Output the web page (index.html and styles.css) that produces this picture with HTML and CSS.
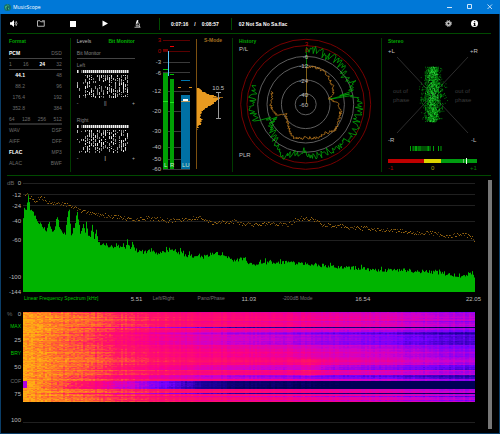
FILE: index.html
```html
<!DOCTYPE html>
<html lang="en">
<head>
    <meta charset="UTF-8">
    <meta name="viewport" content="width=device-width, initial-scale=1.0">
    <title>MusicScope</title>
    <link rel="stylesheet" href="styles.css">
</head>
<body>
    <div class="window">
        <header class="titlebar">
            <svg class="app-icon" width="7" height="7" viewBox="0 0 14 14">
                <circle cx="7" cy="7" r="7" fill="#12706c"/>
                <path d="M3 9 C4 2 8 1 9 4 L7 7 M8 7 L10 11 M4 12 L7 8 M2 6 L5 5" stroke="#5fd08a" stroke-width="1.4" fill="none"/>
                <path d="M6 3 L8 5 L6 12" stroke="#062c38" stroke-width="1.4" fill="none"/>
            </svg>
            <span class="app-name">MusicScope</span>
            <button class="win-btn" aria-label="Minimize"><svg width="6" height="6"><path d="M0 3.5h5" stroke="#cfe6fa"/></svg></button>
            <button class="win-btn" aria-label="Maximize"><svg width="6" height="6"><path d="M.5 .5h4v4h-4z" fill="none" stroke="#cfe6fa"/></svg></button>
            <button class="win-btn" aria-label="Close"><svg width="6" height="6"><path d="M.5 .5l4.500 4.500M5 .5l-4.500 4.500" stroke="#e6f2fc" stroke-width=".8"/></svg></button>
        </header>

        <!-- Transport -->
        <nav class="toolbar">
            <button class="tool tool-first" aria-label="Volume">
                <svg width="8" height="7" viewBox="0 0 16 14"><path d="M0 4.500h3L8 0v14L3 9.500H0z" fill="#fff"/><path d="M10 4q2 3 0 6M12 2q4 5 0 10" fill="none" stroke="#ddd" stroke-width="1.500"/></svg>
            </button>
            <button class="tool" aria-label="Open">
                <svg width="8" height="7" viewBox="0 0 16 14"><path d="M1 12.500V1.500h5l1.500 2h7v9z" fill="none" stroke="#ddd" stroke-width="1.600"/><path d="M10 1h5v3" fill="none" stroke="#aaa" stroke-width="1.400"/></svg>
            </button>
            <button class="tool" aria-label="Stop">
                <svg width="6" height="6"><path d="M0 0h6v6H0z" fill="#fff"/></svg>
            </button>
            <button class="tool" aria-label="Play">
                <svg width="6" height="7"><path d="M.5 .5v6L6 3.500z" fill="#fff"/></svg>
            </button>
            <button class="tool" aria-label="Analyze">
                <svg width="7" height="8" viewBox="0 0 14 16"><path d="M6 0l3 1-2.500 7-3-1z" fill="#fff"/><path d="M8 5q5 2 2 7M3 10h5M1 14.500h12M4 12h7v2" fill="none" stroke="#ddd" stroke-width="1.600"/></svg>
            </button>
            <div class="clock"><span>0:07:16</span><span>/</span><span>0:08:57</span></div>
            <div class="track">02 Not Sa No Sa.flac</div>
            <button class="tool tool-end" aria-label="Settings">
                <svg width="7" height="7" viewBox="0 0 14 14"><circle cx="7" cy="7" r="3.500" fill="none" stroke="#ccc" stroke-width="3"/><circle cx="7" cy="7" r="6" fill="none" stroke="#ccc" stroke-width="2" stroke-dasharray="2.400 2.300"/></svg>
            </button>
            <button class="tool tool-end" aria-label="Info">
                <svg width="7" height="7" viewBox="0 0 14 14"><circle cx="7" cy="7" r="7" fill="#fff"/><path d="M6 2.500h2.500v2H6zM5 6h3.500v4.500h1V12H5v-1.500h1V7.500H5z" fill="#000"/></svg>
            </button>
        </nav>

        <section class="panels">
            <div class="panel format">
                <h2>Format</h2>
                <div class="row line"><span class="on">PCM</span><span>DSD</span></div>
                <div class="row line"><span>1</span><span>16</span><span class="on">24</span><span>32</span></div>
                <div class="row rate"><span class="on">44.1</span><span>48</span></div>
                <div class="row rate"><span>88.2</span><span>96</span></div>
                <div class="row rate"><span>176.4</span><span>192</span></div>
                <div class="row rate"><span>352.8</span><span>384</span></div>
                <div class="row line thick"><span>64</span><span>128</span><span>256</span><span>512</span></div>
                <div class="row"><span>WAV</span><span>DSF</span></div>
                <div class="row"><span>AIFF</span><span>DFF</span></div>
                <div class="row"><span class="on">FLAC</span><span>MP3</span></div>
                <div class="row"><span>ALAC</span><span>BWF</span></div>
            </div>

            <div class="panel levels">
                <div class="bits">
                    <div class="tabs">
                        <button class="tab">Levels</button>
                        <button class="tab active">Bit Monitor</button>
                    </div>
                    <div class="bits-title">Bit Monitor</div>
                    <div class="channel">
                        <span>Left</span>
                        <canvas class="bit-canvas" width="53" height="28"></canvas>
                        <div class="balance"><span>-</span><span>||</span><span>+</span></div>
                    </div>
                    <div class="channel">
                        <span>Right</span>
                        <canvas class="bit-canvas" width="53" height="28"></canvas>
                        <div class="balance"><span>-</span><b>|</b><span>+</span></div>
                    </div>
                </div>
                <svg class="meter" width="87" height="134" viewBox="0 4 87 134">
                    <g shape-rendering="crispEdges">
                        <path d="M18 6h27M18 17h27" stroke="#5c0000"/>
                        <path d="M18 28h27M18 38h27M18 57h27M18 77h27M18 97h27M18 113h27M18 125h27M18 135h27" stroke="#3a3a3a"/>
                        <rect x="18" y="39" width="5" height="96" fill="#00a004"/>
                        <rect x="25" y="45" width="4" height="90" fill="#00a004"/>
                        <rect x="36" y="61" width="9" height="74" fill="#0070a4"/>
                        <path d="M18 67.500h5M25 68.500h4" stroke="#20e020"/>
                        <path d="M18 35.500h5M25 40.500h4" stroke="#00c000"/>
                        <path d="M18 15.500h5" stroke="#700000" stroke-width="2"/>
                        <path d="M25 12.500h4" stroke="#f00000"/>
                        <path d="M36 46.500h9" stroke="#0078b0"/>
                        <path d="M38 65.500h5" stroke="#fff" stroke-width="2"/>
                        <path d="M36 67.500h9" stroke="#b49a60"/>
                        <path d="M33 53.500h3M44 53.500h3" stroke="#d88c18"/>
                        <path d="M51.500 5v130" stroke="#7c5010"/>
                    </g>
                    <path d="M23.500 17v25" stroke="#58c8ff" stroke-width="1"/>
                    <path id="loudness" fill="#e89a20"/>
                    <path d="M68 63.500h10" stroke="#a06818"/>
                    <path d="M73.500 58v27M71 58.500h5M71 84.500h5" stroke="#999"/>
                    <g class="num" text-anchor="end">
                        <text class="red" x="16" y="8">3</text>
                        <text class="red" x="16" y="19">0</text>
                        <text x="16" y="30">-3</text>
                        <text x="16" y="41">-6</text>
                        <text x="16" y="59">-12</text>
                        <text x="16" y="79">-20</text>
                        <text x="16" y="99">-30</text>
                        <text x="16" y="115">-40</text>
                        <text x="16" y="127">-50</text>
                        <text x="16" y="137">-60</text>
                        <text x="79" y="56">10.5</text>
                    </g>
                    <g class="num bar-name"><text x="19" y="133">L</text><text x="25" y="133">R</text><text x="37" y="133">LU</text></g>
                    <text class="amber" x="59" y="8">S-Mode</text>
                </svg>
            </div>

            <div class="panel history">
                <svg width="148" height="134" viewBox="1 4 148 134">
                    <g fill="none" stroke="#5e5e5e">
                        <circle cx="73.700" cy="70.300" r="65" stroke="#780000"/>
                        <circle cx="73.700" cy="70.300" r="58.700" stroke="#780000"/>
                        <circle cx="73.700" cy="70.300" r="48"/>
                        <circle cx="73.700" cy="70.300" r="38.700"/>
                        <circle cx="73.700" cy="70.300" r="24.300"/>
                        <circle cx="73.700" cy="70.300" r="10.500"/>
                    </g>
                    <path id="historyPeak" fill="none" stroke="#00a808" stroke-width=".8"/>
                    <path id="historyLoud" fill="none" stroke="#c07c20" stroke-width=".8"/>
                    <path d="M74.500 13v20" stroke="#007800"/>
                    <path d="M74.500 33v37" stroke="#806018"/>
                    <text class="green" x="7" y="9">History</text>
                    <g class="num">
                        <text x="7" y="17">P/L</text>
                        <text x="7" y="123">PLR</text>
                    </g>
                    <g class="num" text-anchor="end">
                        <text class="red" x="76" y="12">3</text>
                        <text class="red" x="76" y="18">0</text>
                        <text x="76" y="25">-6</text>
                        <text x="76" y="34">-12</text>
                        <text x="76" y="49">-24</text>
                        <text x="76" y="63">-40</text>
                        <text x="76" y="73">-60</text>
                    </g>
                </svg>
            </div>

            <div class="panel stereo">
                <svg width="108" height="134" viewBox="2 4 108 134">
                    <path d="M17 23l71 76M88 23L17 99" stroke="#383838" stroke-width=".8"/>
                    <path id="scope" stroke="#00a010"/>
                    <path id="scopeBright" stroke="#30d840"/>
                    <path id="panBars" stroke="#00a008"/>
                    <g shape-rendering="crispEdges">
                        <rect x="8" y="125" width="36" height="4" fill="#c00000"/>
                        <rect x="44" y="125" width="17" height="4" fill="#dcd400"/>
                        <rect x="61" y="125" width="36" height="4" fill="#009c10"/>
                        <rect x="83" y="125" width="1" height="4" fill="#70c070"/>
                        <rect x="86" y="124" width="1" height="6" fill="#f0fff0"/>
                    </g>
                    <text class="green" x="8" y="9">Stereo</text>
                    <g class="num">
                        <text x="8" y="19">+L</text>
                        <text x="90" y="19">+R</text>
                        <text x="8" y="108">-R</text>
                        <text x="91" y="108">-L</text>
                    </g>
                    <g class="dim">
                        <text x="13" y="59">out of</text>
                        <text x="13" y="68">phase</text>
                        <text x="75" y="59">out of</text>
                        <text x="75" y="68">phase</text>
                    </g>
                    <g class="num">
                        <text class="red" x="8" y="136">-1</text>
                        <text class="yellow" x="51" y="136">0</text>
                        <text class="green-num" x="90" y="136">+1</text>
                    </g>
                </svg>
            </div>
        </section>

        <main class="charts">
            <div class="chart-list">
                <section class="chart spectrum">
                    <div class="scale-y">
                        <span><i>dB</i>0</span><span>-12</span><span>-24</span><span>-40</span><span>-60</span><span>-100</span><span>-144</span>
                    </div>
                    <canvas id="spectrum" class="plot" width="452" height="109"></canvas>
                    <div class="scale-x">
                        <button class="mode active">Linear Frequency Spectrum [kHz]</button>
                        <span>5.51</span>
                        <button class="mode">Left/Right</button>
                        <button class="mode">Pano/Phase</button>
                        <span>11.03</span>
                        <button class="mode">-200dB Mode</button>
                        <span>16.54</span>
                        <span>22.05</span>
                    </div>
                </section>
                <section class="chart spectrogram">
                    <div class="scale-y">
                        <span><i>%</i>0</span>
                        <button class="mode active">MAX</button>
                        <span>25</span>
                        <button class="mode active">BRY</button>
                        <span>50</span>
                        <button class="mode">COF</button>
                        <span>75</span>
                        <span>100</span>
                    </div>
                    <canvas id="spectrogram" class="plot" width="452" height="111"></canvas>
                </section>
            </div>
            <div class="scrollbar"></div>
        </main>
    </div>
    <script src="script.js"></script>
</body>
</html>
```

FILE: styles.css
```css
* {
    box-sizing: border-box;
    margin: 0;
    padding: 0;
}

body {
    font-family: "Liberation Sans", Arial, sans-serif;
    font-size: 5px;
    line-height: 6px;
    background-color: #000;
    color: #bbb;
}

button {
    background: none;
    border: none;
    font: inherit;
    color: inherit;
    text-align: left;
    white-space: nowrap;
    cursor: pointer;
}

svg,
canvas {
    display: block;
}

.window {
    min-height: 100vh;
    display: flex;
    flex-direction: column;
    border: 1px solid #0b3e68;
    border-top: none;
}

/* Title bar */
.titlebar {
    height: 14px;
    padding-left: 4px;
    margin: 0 -1px;
    display: flex;
    align-items: center;
    background-color: #0078d7;
    color: #fff;
}

.app-name {
    font-family: "Open Sans", "Noto Sans", sans-serif;
    margin-left: 2px;
    flex: 1;
}

.win-btn {
    width: 20px;
    height: 14px;
    display: flex;
    align-items: center;
    justify-content: center;
}

/* Toolbar */
.toolbar {
    height: 20px;
    margin: 0 8px 0 6px;
    display: flex;
    align-items: center;
    border-bottom: 1px solid #004a00;
    color: #fff;
    font-weight: bold;
}

.tool {
    width: 32px;
    height: 18px;
    display: flex;
    align-items: center;
    justify-content: center;
}

.tool-first {
    width: 14px;
    margin-right: 4px;
}

.tool-end {
    width: 26px;
}

.tool-end:last-child {
    margin-right: 4px;
}

.clock,
.track {
    height: 12px;
    line-height: 12px;
    border-left: 1px solid #004a00;
    white-space: nowrap;
}

.clock {
    display: flex;
    gap: 6px;
    margin-left: 6px;
    padding: 0 12px 0 11px;
}

.track {
    padding-left: 7px;
    flex: 1;
}

/* Panels */
.panels {
    display: grid;
    grid-template-columns: 63fr 163fr 148fr 110fr;
    margin: 0 8px 0 6px;
    padding: 4px 0 3px;
    border-bottom: 1px solid #004a00;
}

.panel {
    height: 134px;
    border-left: 1px solid #003c00;
}

.panel:first-child {
    border-left: none;
}

.format {
    padding: 0 8px 0 2px;
    color: #6c6c6c;
}

.format h2 {
    height: 10px;
    font-size: 5px;
    color: #00a800;
}

.row {
    height: 11px;
    line-height: 11px;
    display: flex;
    justify-content: space-between;
}

.row.line {
    border-bottom: 1px solid #444;
}

.row.thick {
    border-bottom: 2px solid #2c2c2c;
}

.rate span:first-child {
    width: 16px;
    text-align: right;
}

.row .on {
    color: #fff;
    font-weight: bold;
}

.levels {
    display: flex;
    justify-content: space-between;
    padding-left: 6px;
}

.bits {
    width: 58px;
    color: #808080;
}

.tabs {
    display: flex;
    justify-content: space-between;
    height: 12px;
    align-items: flex-start;
}

.tab {
    color: #bbb;
    line-height: 6px;
}

.tab.active {
    color: #00b400;
    font-weight: bold;
}

.bits-title {
    height: 9px;
    border-bottom: 1px solid #444;
    margin-bottom: 3px;
}

.channel {
    height: 55px;
}

.channel > span {
    display: block;
    height: 8px;
}

.bit-canvas {
    width: 53px;
    height: 28px;
}

.balance {
    display: flex;
    justify-content: space-between;
    line-height: 11px;
    color: #aaa;
}

text {
    font-size: 5px;
    font-weight: bold;
}

.num text {
    font-size: 6px;
    font-weight: normal;
    fill: #c0c0c0;
}

.num .red {
    fill: #b80000;
}

.num .yellow {
    fill: #b0a800;
}

.num .green-num {
    fill: #008000;
}

.bar-name text {
    fill: #cfe8cf;
}

.amber {
    fill: #a87020;
}

.green {
    fill: #00a800;
}

.dim text {
    font-size: 6px;
    font-weight: normal;
    fill: #3c3c3c;
}

/* Charts */
.charts {
    flex: 1;
    display: flex;
    padding: 4px 7px 4px 6px;
}

.chart-list {
    flex: 1;
}

.chart {
    display: grid;
    grid-template-columns: 16px 1fr;
    margin-right: 13px;
}

.scale-y {
    display: grid;
    font-size: 6px;
    padding-right: 2px;
}

.scale-y span,
.scale-y button {
    display: flex;
    justify-content: flex-end;
    height: 6px;
    line-height: 6px;
    white-space: nowrap;
}

.scale-y i {
    font-style: normal;
    color: #666;
    margin-right: auto;
}

.spectrum .scale-y {
    grid-template-rows: 12px 11px 15px 19px 37px 15px 6px;
}

.spectrogram .scale-y {
    grid-template-rows: 12px 14px 13px 14px 14px 13px 26px 6px;
}

.plot {
    width: 100%;
}

.spectrum .plot {
    height: 109px;
    margin-top: 3px;
}

.spectrogram .plot {
    height: 111px;
    margin-top: 1px;
}

.scale-x {
    grid-column: 2;
    display: grid;
    grid-template-columns: 107fr 22fr 45fr 44fr 41fr 73fr 111fr 16fr;
    margin-right: -7px;
    padding-left: 1px;
    font-size: 6px;
    line-height: 8px;
    height: 16px;
    align-items: start;
}

.mode {
    color: #707070;
    font-size: 5px;
    line-height: 6px;
}

.mode.active {
    color: #00c800;
}

.scrollbar {
    width: 4px;
    background-color: #777;
}
```

FILE: script.js
```javascript
// Small seeded generator so every redraw gives the same signal
let seed = 7;
function rnd() {
    seed = (seed * 16807) % 2147483647;
    return seed / 2147483647;
}

// Linear interpolation over [x, y] points
function curve(points, x) {
    for (let i = 1; i < points.length; i++) {
        const a = points[i - 1];
        const b = points[i];
        if (x <= b[0]) {
            return a[1] + (b[1] - a[1]) * (x - a[0]) / (b[0] - a[0]);
        }
    }
    return points[points.length - 1][1];
}

// Bit monitor
document.querySelectorAll('.bit-canvas').forEach(function (canvas) {
    const ctx = canvas.getContext('2d');
    ctx.fillStyle = '#f0f0f0';
    for (let i = 0; i < 26; i++) {
        if (i === 1) continue;
        ctx.globalAlpha = i === 2 ? 0.4 : 1;
        ctx.fillRect(i * 2, 0, 1.5, 3);
    }
    for (let col = 0; col < 26; col++) {
        let y = 5;
        while (y < 27) {
            const run = 1 + Math.floor(rnd() * 3);
            if (rnd() < (col < 4 ? 0.3 : 0.68)) {
                ctx.globalAlpha = 0.5 + rnd() * 0.5;
                ctx.fillRect(col * 2, y, 1, Math.min(run, 28 - y));
            }
            y += run + (rnd() < 0.6 ? 1 : 0);
        }
    }
});

// Loudness distribution beside the meter
const loudness = [[54, 2], [57, 5], [60, 13], [62, 19], [64, 22], [66, 19], [69, 17],
    [71, 13], [74, 8], [77, 5], [81, 3], [86, 5], [89, 4], [93, 1], [96, 0]];
let d = 'M52 54';
for (let y = 54; y < 97; y++) {
    const w = Math.max(0, curve(loudness, y) + rnd() * 2 - 1);
    d += `L${52 + w} ${y}V${y + 1}`;
}
document.getElementById('loudness').setAttribute('d', d + 'L52 97Z');

// Polar history
function polar(points, noise) {
    let path = '';
    for (let a = 0; a <= 291; a += 1.2) {
        const r = Math.min(59, curve(points, a) + (rnd() - 0.5) * noise);
        const t = a * Math.PI / 180;
        path += (path ? 'L' : 'M') + (73.7 + r * Math.sin(t)).toFixed(1) + ' ' + (70.3 - r * Math.cos(t)).toFixed(1);
    }
    return path;
}

const peak = [[0, 55], [25, 53], [37, 54], [47, 51], [55, 47], [66, 52], [73, 48], [75, 46], [76, 26],
    [77, 47], [78, 28], [79, 50], [80, 48], [88, 53], [103, 54], [128, 56], [143, 54], [158, 52], [172, 52],
    [180, 47], [192, 51], [204, 56], [215, 49], [230, 43], [241, 40], [246, 31], [248, 52], [249, 30],
    [251, 54], [263, 53], [277, 54], [291, 54]];
const loud = [[0, 37], [19, 38], [33, 37], [48, 34], [70, 30], [75, 23.5], [82, 27], [90, 33], [98, 35],
    [115, 37], [132, 39], [145, 35], [164, 35], [180, 33], [199, 36], [212, 30], [224, 26], [245, 22],
    [249, 31], [272, 36], [280, 34], [291, 36]];
document.getElementById('historyPeak').setAttribute('d', polar(peak, 9));
document.getElementById('historyLoud').setAttribute('d', polar(loud, 3));

// Goniometer cloud
function cloud(count, spread) {
    let path = '';
    for (let i = 0; i < count; i++) {
        const t = rnd();
        const y = 33 + t * 55;
        const x = 52.5 + (rnd() + rnd() + rnd() - 1.5) * spread * (0.6 + 0.4 * Math.sin(t * Math.PI));
        path += `M${x.toFixed(1)} ${y.toFixed(1)}h.8`;
    }
    return path;
}
document.getElementById('scope').setAttribute('d', cloud(1200, 11));
document.getElementById('scope').setAttribute('stroke-width', '0.8');
document.getElementById('scopeBright').setAttribute('d', cloud(260, 7));
document.getElementById('scopeBright').setAttribute('stroke-width', '0.8');

d = '';
[30.5, 33, 34, 35.5, 36.5, 38, 39, 40, 41, 43, 45, 47, 48, 48.5, 50, 53.5, 58.5, 61].forEach(function (x) {
    d += `M${x} 112v5`;
});
document.getElementById('panBars').setAttribute('d', d);

// Frequency spectrum
function drawSpectrum() {
    const ctx = document.getElementById('spectrum').getContext('2d');
    ctx.fillStyle = '#202020';
    [0, 11, 22, 38, 57].forEach(function (y) {
        ctx.fillRect(0, y, 452, 1);
    });

    // Offsets are measured downwards from 0 dB
    const body = [[0, 35], [1, 26], [3, 28], [5, 13], [7, 27], [10, 30], [14, 38], [18, 42], [23, 48], [26, 39],
        [30, 50], [34, 34], [37, 47], [42, 52], [45, 27], [46, 27], [48, 53], [51, 43], [54, 30], [57, 49], [60, 41],
        [62, 49], [63, 37], [65, 53], [67, 54], [69, 43], [71, 57], [73, 46], [75, 61], [80, 61], [88, 64],
        [93, 62], [98, 65], [100, 59], [102, 66], [104, 61], [107, 66], [109, 60], [112, 67], [120, 69],
        [128, 67], [135, 71], [150, 67], [165, 73], [180, 74], [191, 70], [200, 71], [208, 77], [222, 76],
        [226, 81], [230, 81], [250, 79], [275, 80], [290, 81], [310, 84], [332, 85], [350, 87], [375, 87],
        [390, 88], [410, 89], [425, 91], [440, 93], [449, 89], [451, 95]];
    ctx.fillStyle = '#00b400';
    for (let x = 0; x < 452; x++) {
        let y = curve(body, x) + (rnd() - 0.5) * 4;
        if (x > 75 && rnd() < 0.04) y -= 3;
        ctx.fillRect(x, y, 1, 109 - y);
    }

    const top = [[0, 10], [6, 13], [12, 17], [19, 14], [25, 19], [35, 20], [45, 22], [55, 26], [70, 31],
        [90, 33], [110, 36], [125, 35], [145, 37], [165, 36], [178, 34], [190, 40], [210, 38], [226, 41],
        [250, 40], [264, 42], [275, 35], [290, 36], [300, 42], [320, 43], [350, 46], [375, 47],
        [390, 50], [405, 49], [425, 53], [440, 51], [448, 53], [452, 57]];
    for (let x = 2; x < 452; x++) {
        ctx.fillStyle = rnd() > 0.5 ? '#986610' : '#64420a';
        ctx.fillRect(x, Math.round(curve(top, x) + (rnd() - 0.5) * 4), 1, 1);
    }
}

// Value 0..1 to heat colour
const heat = [[0, [0, 0, 85]], [0.2, [30, 0, 160]], [0.35, [115, 0, 255]], [0.5, [205, 0, 205]],
    [0.64, [250, 0, 135]], [0.75, [255, 20, 100]], [0.88, [255, 110, 40]], [1, [255, 175, 20]]];
function heatColor(v) {
    const c = [0, 1, 2].map(function (k) {
        return Math.round(curve(heat.map(function (h) {
            return [h[0], h[1][k]];
        }), v));
    });
    return `rgb(${c.join(',')})`;
}

function drawSpectrogram() {
    const ctx = document.getElementById('spectrogram').getContext('2d');
    const base = [[0, 0.98], [0.04, 0.93], [0.13, 0.86], [0.22, 0.79], [0.35, 0.71], [0.55, 0.66], [0.75, 0.57], [1, 0.45]];
    // [first row, last row, loss]
    const bands = [[9, 9, 0.1], [15, 15, 0.5], [16, 17, 0.06], [18, 19, 0.12], [20, 22, 0.24], [23, 32, 0.17], [33, 36, 0.08], [37, 46, 0.04],
        [53, 57, 0.15], [63, 64, 0.24], [65, 66, 0.18], [67, 68, 0.06], [69, 76, 0.62], [81, 81, 0.45], [84, 84, 0.14], [88, 88, 0.1]];
    const columns = [];
    for (let x = 0; x < 452; x += 2) {
        columns.push((rnd() - 0.5) * 0.05);
    }
    for (let y = 0; y < 90; y++) {
        let loss = 0;
        bands.forEach(function (b) {
            if (y >= b[0] && y <= b[1]) loss = b[2];
        });
        const ripple = (rnd() - 0.5) * 0.07;
        for (let x = 0; x < 452; x += 2) {
            const t = x / 452;
            const fade = Math.min(1, Math.max(0, (t - 0.02) / 0.45));
            let v = curve(base, t) - loss * fade + ripple + columns[x / 2] + (rnd() - 0.5) * (0.13 - 0.1 * Math.min(1, t * 3));
            // Energy burst near 15 kHz
            if (y > 46 && y < 64) v += 0.08 * Math.exp(-Math.pow((x - 285) / 14, 2));
            if (y > 68 && y < 76 && x < 3) v = 0.45;
            if (y < 1) v -= 0.1;
            ctx.fillStyle = heatColor(Math.min(1, Math.max(0, v)));
            ctx.fillRect(x, y, 2, 1);
        }
    }
    ctx.fillStyle = '#202020';
    ctx.fillRect(0, 110, 452, 1);
}

drawSpectrum();
drawSpectrogram();
```
